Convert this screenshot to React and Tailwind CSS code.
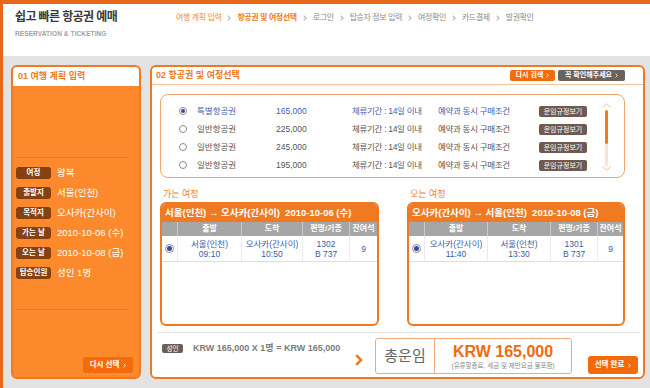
import React from 'react';

const Chev = ({ className = '' }) => (
  <svg viewBox="0 0 4 6" className={className} fill="none" stroke="currentColor" strokeWidth="1.1">
    <path d="M0.7 0.6 L3.2 3 L0.7 5.4" />
  </svg>
);

const Radio = ({ on, big }) => (
  <span className={`${big ? 'w-[9px] h-[9px]' : 'w-[8px] h-[8px]'} rounded-full border border-[#8c8c8c] bg-white flex items-center justify-center shrink-0`}>
    {on && <span className={`${big ? 'w-[5px] h-[5px]' : 'w-[4px] h-[4px]'} rounded-full bg-[#2d4f9e]`} />}
  </span>
);

const steps = [
  ['여행 계획 입력', 'text-[#f3893a]'],
  ['항공권 및 여정선택', 'text-[#f07a20] font-bold'],
  ['로그인', 'text-[#8a8a8a]'],
  ['탑승자 정보 입력', 'text-[#8a8a8a]'],
  ['여정확인', 'text-[#8a8a8a]'],
  ['카드결제', 'text-[#8a8a8a]'],
  ['발권확인', 'text-[#8a8a8a]'],
];

const summary = [
  ['여정', '왕복'],
  ['출발지', '서울(인천)'],
  ['목적지', '오사카(간사이)'],
  ['가는 날', '2010-10-06 (수)'],
  ['오는 날', '2010-10-08 (금)'],
  ['탑승인원', '성인 1명'],
];

const fares = [
  ['특별항공권', '165,000', true],
  ['일반항공권', '225,000'],
  ['일반항공권', '245,000'],
  ['일반항공권', '195,000'],
];

const goCols = ['w-[15px]', 'w-[64px]', 'w-[61px]', 'w-[47px]', 'w-[28px]'];
const backCols = ['w-[15px]', 'w-[63px]', 'w-[63px]', 'w-[47px]', 'w-[26px]'];

function TripBox({ label, title, cols, width, dep, arr, flight, seats }) {
  const cells = [dep, arr, flight];
  return (
    <div className={width}>
      <div className="h-[12px] leading-[12px] text-[9px] text-[#f08030] pl-[3px] mb-[2px]">{label}</div>
      <div className="h-[124px] border-2 border-[#f07a22] rounded-[6px] overflow-hidden bg-white">
        <div className="h-[18px] bg-[#f07a22] text-white font-bold text-[9.5px] leading-[18px] pl-[3px] whitespace-pre">{title}</div>
        <div className="flex h-[14px] bg-[#a6a6a6] text-white font-bold text-[8px] leading-[14px] text-center">
          {['', '출발', '도착', '편명/기종', '잔여석'].map((h, i) => (
            <div key={i} className={`${cols[i]} ${i > 0 ? 'border-l border-[#c9c9c9]' : ''}`}>{h}</div>
          ))}
        </div>
        <div className="flex h-[26px] border-b border-[#dedede] text-[8.5px] leading-[10px] text-[#3b5ca8] text-center">
          <div className={`${cols[0]} flex items-center justify-center`}><Radio on big /></div>
          {cells.map((c, i) => (
            <div key={i} className={`${cols[i + 1]} border-l border-[#ececec] flex flex-col justify-center`}>
              <span>{c[0]}</span>
              <span>{c[1]}</span>
            </div>
          ))}
          <div className={`${cols[4]} border-l border-[#ececec] flex items-center justify-center`}>{seats}</div>
        </div>
      </div>
    </div>
  );
}

export default function App() {
  return (
    <div className="w-[650px] h-[388px] overflow-hidden bg-white border-t-4 border-l-[3px] border-[#e8671a] font-['Liberation_Sans','Noto_Sans_CJK_KR',sans-serif] flex flex-col">
      {/* top header */}
      <div className="h-[52px] flex shrink-0">
        <div className="w-[170px] pl-[12px] pt-[4px]">
          <div className="text-[12px] leading-[18px] font-bold text-[#3a3a3a] tracking-[-0.6px]">쉽고 빠른 항공권 예매</div>
          <div className="text-[6.5px] leading-[10px] font-bold text-[#a2a2a2] mt-[3px] tracking-[0.1px]">RESERVATION &amp; TICKETING</div>
        </div>
        <div className="flex items-center h-[28px] gap-[6px] ml-[3px] text-[8px] tracking-[-0.4px]">
          {steps.map(([s, c], i) => (
            <React.Fragment key={s}>
              {i > 0 && <Chev className="w-[4px] h-[6px] text-[#b4b4b4]" />}
              <span className={c}>{s}</span>
            </React.Fragment>
          ))}
        </div>
      </div>

      {/* body */}
      <div className="flex-1 bg-[#e3e3e3] flex pt-[9px] pl-[8px] gap-[9px]">
        {/* left panel */}
        <div className="w-[130px] h-[314px] border-2 border-[#ef7a24] rounded-[6px] bg-[#fc8a2d] overflow-hidden flex flex-col">
          <div className="h-[19px] bg-white pl-[5px] text-[9px] leading-[19px] font-bold text-[#f07a20]">01 여행 계획 입력</div>
          <div className="mt-[71px] mx-[3px] mr-[12px] h-px bg-[#ee7722]" />
          <div className="mt-[5px] pl-[3px]">
            {summary.map(([k, v]) => (
              <div key={k} className="h-[20px] flex items-center">
                <span className="w-[35px] h-[12px] rounded-[3px] bg-[#85410f] text-white text-[7.5px] font-bold leading-[12px] text-center">{k}</span>
                <span className="ml-[6px] text-white text-[9.5px]">{v}</span>
              </div>
            ))}
          </div>
          <div className="mt-[26px] mx-[3px] mr-[12px] h-px bg-[#ee7722]" />
          <div className="mt-[47px] flex justify-end pr-[6px]">
            <button className="w-[50px] h-[16px] rounded-[3px] bg-[#f36b0c] text-white text-[7.5px] font-bold flex items-center justify-center gap-[4px]">
              다시 선택 <Chev className="w-[3px] h-[5px]" />
            </button>
          </div>
        </div>

        {/* main panel */}
        <div className="w-[495px] h-[314px] border-2 border-[#ef7a24] rounded-[6px] bg-white flex flex-col">
          <div className="h-[18px] border-b border-[#f6c49c] flex items-center justify-between pl-[4px] pr-[18px]">
            <span className="text-[9px] font-bold text-[#f07a20]">02 항공권 및 여정선택</span>
            <div className="flex gap-[3px]">
              <span className="w-[45px] h-[11px] rounded-[2px] bg-[#f36b0c] text-white text-[7px] font-bold flex items-center justify-center gap-[3px]">다시 검색 <Chev className="w-[3px] h-[5px]" /></span>
              <span className="w-[67px] h-[11px] rounded-[2px] bg-[#6d615b] text-white text-[7px] font-bold flex items-center justify-center gap-[3px]">꼭 확인해주세요 <Chev className="w-[3px] h-[5px]" /></span>
            </div>
          </div>

          <div className="px-[8px]">
            {/* fares */}
            <div className="mt-[9px] w-[465px] h-[84px] border border-[#f4a468] rounded-[8px] flex">
              <div className="flex-1 pt-[7px]">
                {fares.map(([n, p, on], i) => (
                  <div key={i} className={`h-[18px] flex items-center pl-[18px] text-[8.5px] ${on ? 'text-[#3d62b4]' : 'text-[#555]'}`}>
                    <Radio on={on} />
                    <span className="ml-[10px] w-[79px]">{n}</span>
                    <span className="w-[76px]">{p}</span>
                    <span className="w-[86px] tracking-[-0.3px]">체류기간 : 14일 이내</span>
                    <span className="w-[101px] tracking-[-0.3px]">예약과 동시 구매조건</span>
                    <span className="w-[48px] h-[11px] rounded-[2px] bg-[#6e5a4f] text-white text-[7px] leading-[11px] text-center">운임규정보기</span>
                  </div>
                ))}
              </div>
              <div className="w-[36px] flex flex-col items-center pt-[8px]">
                <svg viewBox="0 0 10 5" className="w-[9px] h-[5px]" fill="none" stroke="#f6b98a" strokeWidth="1"><path d="M0.5 4.5 L5 0.7 L9.5 4.5" /></svg>
                <div className="mt-[2px] w-[3px] h-[56px] bg-[#fce3d0] rounded-full">
                  <div className="w-[3px] h-[34px] bg-[#f47a1c] rounded-full" />
                </div>
                <svg viewBox="0 0 10 5" className="w-[9px] h-[5px]" fill="none" stroke="#f6b98a" strokeWidth="1"><path d="M0.5 0.5 L5 4.3 L9.5 0.5" /></svg>
              </div>
            </div>

            {/* trips */}
            <div className="mt-[10px] flex gap-[28px]">
              <TripBox label="가는 여정" width="w-[219px]" cols={goCols}
                title="서울(인천) → 오사카(간사이)  2010-10-06 (수)"
                dep={['서울(인천)', '09:10']} arr={['오사카(간사이)', '10:50']} flight={['1302', 'B 737']} seats="9" />
              <TripBox label="오는 여정" width="w-[218px]" cols={backCols}
                title="오사카(간사이) → 서울(인천)  2010-10-08 (금)"
                dep={['오사카(간사이)', '11:40']} arr={['서울(인천)', '13:30']} flight={['1301', 'B 737']} seats="9" />
            </div>
          </div>

          <div className="mt-[6px] ml-[6px] mr-[3px] h-px bg-[#e2e2e2]" />

          {/* total */}
          <div className="flex items-start pl-[10px] pt-[4px]">
            <div className="w-[190px] mt-[5px] flex items-center">
              <span className="w-[21px] h-[9px] rounded-[2px] bg-[#6a5e58] text-white text-[6.5px] leading-[9px] text-center">성인</span>
              <span className="ml-[10px] text-[9px] font-bold text-[#7c7c7c]">KRW 165,000 X 1명 = KRW 165,000</span>
            </div>
            <svg viewBox="0 0 8 12" className="w-[8px] h-[12px] mt-[17px] ml-[3px]" fill="none" stroke="#f07a20" strokeWidth="2.6"><path d="M1.2 1.2 L6 6 L1.2 10.8" /></svg>
            <div className="ml-[12px] mt-[1px] w-[197px] h-[36px] border border-[#f0aa7c] rounded-[3px] flex">
              <div className="w-[59px] border-r border-[#f0aa7c] flex items-center justify-center text-[15px] text-[#666]">총운임</div>
              <div className="flex-1 flex flex-col items-center">
                <span className="mt-[3px] text-[16px] leading-[19px] font-bold text-[#f06a10]">KRW 165,000</span>
                <span className="text-[6.5px] leading-[10px] text-[#8a8a8a]">(유류할증료, 세금 및 제반요금 불포함)</span>
              </div>
            </div>
            <button className="ml-[16px] mt-[19px] w-[50px] h-[18px] rounded-[3px] bg-[#f26a0c] text-white text-[7.5px] font-bold flex items-center justify-center gap-[4px]">
              선택 완료 <Chev className="w-[3px] h-[5px]" />
            </button>
          </div>
        </div>
      </div>
    </div>
  );
}
